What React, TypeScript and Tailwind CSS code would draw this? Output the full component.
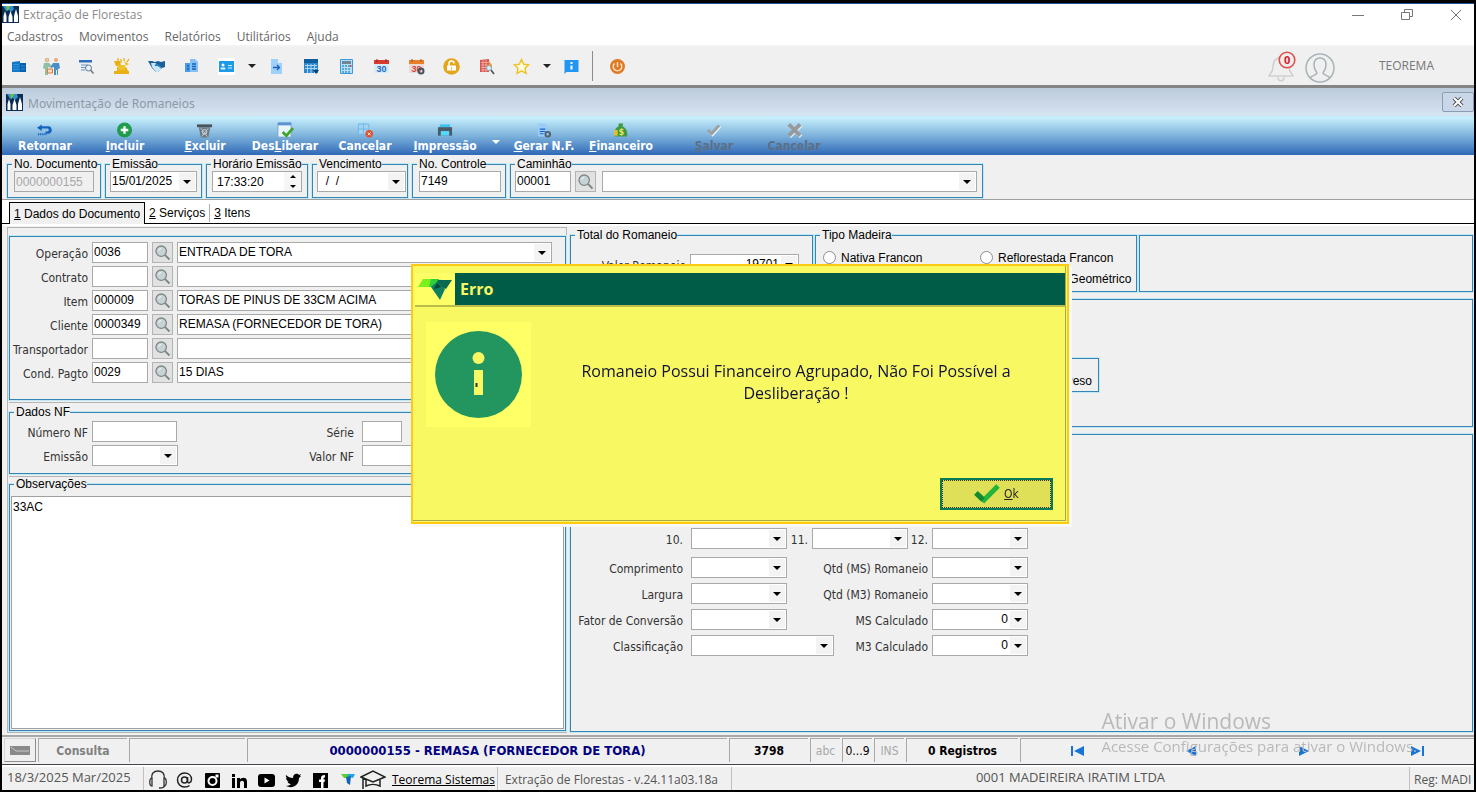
import type { ReactNode } from "react";
import clsx from "clsx";

const TAHOMA = "font-['DejaVu_Sans_Condensed','DejaVu_Sans',sans-serif]";
const SEGOE = "font-['Open_Sans',sans-serif]";

const box = "h-[21px] border border-[#a9a9a9] text-[12px] leading-[19px] outline-none rounded-none";

const TextField = ({ label, id, value = "", className }: { label?: string; id?: string; value?: string; className?: string }) => (
  <input id={id} aria-label={label} defaultValue={value} className={clsx(box, "bg-white px-px pb-px", className)} />
);

const SelectField = ({ label, id, value = "", className, right }: { label?: string; id?: string; value?: string; className?: string; right?: boolean }) => (
  <div className={clsx("grid shrink-0", className)}>
    <select
      id={id}
      aria-label={label}
      defaultValue={value}
      className={clsx(box, "col-start-1 row-start-1 w-full min-w-0 appearance-none bg-white pl-px", right ? "pr-[19px] [text-align-last:right]" : "pr-4")}
    >
      <option value={value}>{value}</option>
    </select>
    <span className="pointer-events-none col-start-1 row-start-1 mr-0.5 flex h-[17px] w-4 items-center justify-center self-center justify-self-end bg-[#f3f3f3]">
      <Caret />
    </span>
  </div>
);

const Caret = ({ color = "#000", up }: { color?: string; up?: boolean }) => (
  <svg width="8" height="4" viewBox="0 0 8 4" className={up ? "rotate-180" : ""}>
    <path d="M0 0h8L4 4z" fill={color} />
  </svg>
);

const SpinCaret = ({ up }: { up?: boolean }) => (
  <svg width="6" height="3" viewBox="0 0 6 3" className={up ? "rotate-180" : ""}>
    <path d="M0 0h6L3 3z" fill="#000" />
  </svg>
);

const LookupButton = ({ label }: { label: string }) => (
  <button type="button" aria-label={label} className="flex h-[21px] w-[21px] shrink-0 items-center justify-center border border-[#b4b4b4] bg-[#e1e1e1]">
    <svg width="17" height="17" viewBox="0 0 17 17" fill="none">
      <circle cx="7.2" cy="7.2" r="5.2" fill="#c6d3d4" stroke="#7d8788" strokeWidth="1.3" />
      <path d="M4.5 6.5a3 3 0 0 1 2.5-2" stroke="#fff" />
      <path d="M11 11l4.5 4.5" stroke="#7d8788" strokeWidth="1.8" />
    </svg>
  </button>
);

const Group = ({ title, className, bodyClass, children }: { title?: string; className?: string; bodyClass?: string; children?: ReactNode }) => (
  <fieldset className={clsx("min-w-0 shrink-0 border border-[#3585b5] shadow-[0_0_0_1px_#c3e8f5]", className)}>
    {title && <legend className="ml-1 bg-[#f0f0f0] pl-0.5 text-[12px] leading-[13px] whitespace-nowrap">{title}</legend>}
    <div className={bodyClass}>{children}</div>
  </fieldset>
);

const TreesIcon = () => (
  <svg width="17" height="17" viewBox="0 0 17 17">
    <path d="M0 0h17v17H0z" fill="#0c2d55" />
    <path d="M1 0h10l1 3-3 3-2-2-3 1z" fill="#2f8fd0" />
    <path d="M4 0h4l-1 3-2 2z" fill="#6fbf3f" />
    <path d="M3 5l1.500 5v6h-3v-6zM8.500 5l2 6v5h-4v-5zM14 3l2 7v6h-4v-6z" fill="#fff" />
  </svg>
);

const toolIcons: Record<string, ReactNode> = {
  Empresas: (
    <>
      <path d="M2 4l8-1v11H2z" fill="#1278c8" />
      <path d="M10 5h6v9h-6z" fill="#0c5fa8" />
      <path d="M3 6.500h6M3 9h6M3 11.500h6M11 8h4M11 11h4" stroke="#2f92dc" />
    </>
  ),
  Clientes: (
    <>
      <circle cx="4" cy="2" r="2" fill="#e8c9a0" stroke="#c09a6a" strokeWidth=".6" />
      <circle cx="13" cy="2" r="2" fill="#e8a878" />
      <path d="M1 5h5l3 3v2L5 9v8H2v-6L0 10z" fill="#8fc0a6" />
      <path d="M10 5h6l1 5-2 1v6h-1v-5h-1v5h-2V9L8 10V8z" fill="#4a90c8" />
      <path d="M4.500 11h5v4h-5z" fill="#ffd9c0" stroke="#e07a3a" />
    </>
  ),
  Consulta: (
    <>
      <path d="M1 2h13v2.500H1z" fill="#2b6fbd" />
      <path d="M3 7h7M3 9.500h4M3 12h4" stroke="#5b96d6" strokeWidth="1.200" />
      <circle cx="10.500" cy="10" r="3" fill="#e8f1f8" stroke="#6b7a88" />
      <path d="M12.500 12l3 3.500" stroke="#6b7a88" strokeWidth="1.500" />
    </>
  ),
  Producao: (
    <>
      <path d="M1 13h15v3H1zM4 9h9l2 4H4zM1 3h6l1 5H3z" fill="#e8b010" />
      <path d="M5 7h7v5H5zM11 3l5 3-3 2z" fill="#f0c22a" />
      <path d="M5 3V0M8 5V1M11 3V0M14 4l2-3" stroke="#e8b010" strokeWidth="1.300" />
    </>
  ),
  Negociacao: (
    <>
      <path d="M0 3h4l3 1 3-1 3 1 4-1v6l-3 1-4 4H8L4 10z" fill="#1c5e96" />
      <path d="M3 5h5l-1 3h3l4 3-4 3H8L4 9z" fill="#c9e5f7" />
      <path d="M8 6l6 4" stroke="#2d8bd0" strokeWidth="1.500" />
    </>
  ),
  Documentos: (
    <>
      <path d="M2 5h7v9H2z" fill="#4a9ae8" />
      <path d="M7 1h5l3 3v10H7z" fill="#86c0f5" />
      <path d="M9 6h4M9 8.500h4M9 11h4M4 8h2M4 11h2" stroke="#1663b8" strokeWidth="1.300" />
    </>
  ),
  Cadastro: (
    <>
      <path d="M0 0h17v17H0z" fill="#fff" />
      <path d="M1 3h15v11H1z" fill="#1e9be8" />
      <circle cx="5" cy="7" r="1.500" fill="#fff" />
      <path d="M3 10h4v1H3zM10 7.500h4M10 10h4" fill="#fff" stroke="#d3eefc" />
    </>
  ),
  Exportar: (
    <>
      <path d="M3 1h7l4 4v11H3z" fill="#9fd0fa" />
      <path d="M10 1l4 4h-4z" fill="#e3f2fd" />
      <path d="M5 9.500h6M9 7l2.500 2.500L9 12" stroke="#1a5fb8" strokeWidth="1.300" fill="none" />
    </>
  ),
  Agenda: (
    <>
      <path d="M1 1h14v4H1z" fill="#0f5f9e" />
      <path d="M1 5h14v10H1z" fill="#2c88cc" />
      <path d="M2 7.500h12M2 10.500h12M4.500 6v9M8 6v9M11.500 6v9" stroke="#a9d5f2" />
      <path d="M10 12h6l-3 4z" fill="#0b3f70" />
    </>
  ),
  Calculadora: (
    <>
      <path d="M2.500 1.500h12v14h-12z" fill="#b9dff5" stroke="#3b9ad8" />
      <path d="M4 3h9v3H4z" fill="#6e8796" />
      <path d="M5 7v8M8 7v8M11 7v8" stroke="#5aa9dc" strokeDasharray="2 1" strokeWidth="2" />
      <path d="M12 7h1.500v2H12z" fill="#d04a3a" />
    </>
  ),
  Calendario: (
    <>
      <path d="M1 2h15v4H1z" fill="#d83a30" />
      <path d="M1 6h15v9H1z" fill="#d6ebfa" />
      <path d="M4 1v3M13 1v3" stroke="#8c2a24" />
      <text x="3.500" y="13.500" fontSize="9" fontWeight="700" fill="#1e66c0">30</text>
    </>
  ),
  Parametros: (
    <>
      <path d="M1 2h15v4H1z" fill="#e8802a" />
      <path d="M1 6h15v9H1z" fill="#e9dcd6" />
      <path d="M4 1v3M13 1v3" stroke="#a0521a" />
      <text x="3.500" y="13.500" fontSize="9" fontWeight="700" fill="#d8403a">30</text>
      <circle cx="13" cy="13" r="2.500" fill="none" stroke="#44535c" strokeWidth="2" />
    </>
  ),
  Bloqueio: (
    <>
      <circle cx="8.500" cy="8.500" r="8.300" fill="#e3a51a" />
      <path d="M4 7.500h9v5H4z" fill="#fff" />
      <path d="M6 8V5.500a2.500 2.500 0 0 1 5 0" stroke="#fff" strokeWidth="1.500" fill="none" />
      <path d="M8 9.500h1v2H8z" fill="#e3a51a" />
    </>
  ),
  Relatorio: (
    <>
      <path d="M2 2l9-1v13H2z" fill="#d8564e" />
      <path d="M3 4.500h8M3 7h8M3 9.500h8M3 12h8M5 2v12M8 2v12" stroke="#f3b5ac" strokeWidth=".8" />
      <path d="M11 3l3 4v4h-3z" fill="#f0a020" />
      <circle cx="11" cy="10" r="2.500" fill="#dff0fb" stroke="#8aa5b8" />
      <path d="M13 12l3 4" stroke="#4a4a5a" strokeWidth="1.500" />
    </>
  ),
  Favoritos: <path d="M8.500 1.500l2.200 4.700 5 .6-3.700 3.500 1 5-4.500-2.500L4 15.300l1-5L1.300 6.800l5-.6z" fill="#fffbe0" stroke="#eec32a" strokeWidth="1.500" />,
  Informacao: (
    <>
      <path d="M1.500 2h14v12h-12l-2 2z" fill="#2196f3" />
      <path d="M8.500 4v2M8.500 7.500v4" stroke="#fff" strokeWidth="2" />
    </>
  ),
  Sair: (
    <>
      <circle cx="8.500" cy="8.500" r="7.500" fill="#e07b25" />
      <path d="M5.500 5.500a4.300 4.300 0 1 0 6 0M8.500 4v5" stroke="#fbe6d2" strokeWidth="1.400" fill="none" />
    </>
  ),
};

const ToolButton = ({ name, className = "w-[35px]" }: { name: string; className?: string }) => (
  <button type="button" aria-label={name} className={clsx("flex h-full shrink-0 items-center justify-center", className)}>
    <svg width="17" height="17" viewBox="0 0 17 17">{toolIcons[name]}</svg>
  </button>
);

const MenuArrow = ({ color }: { color?: string }) => (
  <button type="button" aria-label="Mais" className="flex h-full w-[15px] shrink-0 items-center justify-center">
    <Caret color={color} />
  </button>
);

const actions: { key: string; label: ReactNode; icon: ReactNode; className?: string; disabled?: boolean; arrow?: boolean }[] = [
  {
    key: "retornar",
    label: "Retornar",
    icon: (
      <>
        <path d="M5 1L0 4.500 5 8V5.500h6c2 0 2 3 0 3H9V11h3c5 0 5-8 0-8H5z" fill="#1763c0" />
        <path d="M1 11.500h9" stroke="#1763c0" strokeWidth="2" strokeDasharray="1.200 .8" />
      </>
    ),
  },
  {
    key: "incluir",
    label: <><u>I</u>ncluir</>,
    icon: (
      <>
        <circle cx="8" cy="7" r="8" fill="#1f9d4d" />
        <path d="M8 3v8M4 7h8" stroke="#fff" strokeWidth="2.500" />
      </>
    ),
  },
  {
    key: "excluir",
    label: <><u>E</u>xcluir</>,
    icon: (
      <>
        <path d="M0 1h16v3H0z" fill="#4a545c" />
        <path d="M2 4h12l-2 11H4z" fill="#6c7880" />
        <path d="M4 5l7 9M12 5l-7 9" stroke="#cdd8de" strokeWidth=".9" />
        <circle cx="8" cy="9" r="2.500" fill="none" stroke="#cdd8de" />
      </>
    ),
  },
  {
    key: "desliberar",
    label: <>Des<u>L</u>iberar</>,
    icon: (
      <>
        <path d="M1-.500h14v15H1z" fill="#eaf5fc" stroke="#7ba5cc" />
        <path d="M1-1h14v3H1z" fill="#5b93d0" />
        <path d="M6 9l4 4 7-8" stroke="#3fa62c" strokeWidth="3" fill="none" />
      </>
    ),
  },
  {
    key: "cancelar-item",
    label: <>Cance<u>l</u>ar</>,
    icon: (
      <>
        <path d="M1.500.500h11v11h-11zM7 0v11M1 6h11" stroke="#6fb6ea" fill="#a4d3f2" />
        <circle cx="13" cy="11" r="4" fill="#e2502a" />
        <path d="M11.500 9.500l3 3M14.500 9.500l-3 3" stroke="#fff" />
      </>
    ),
  },
  {
    key: "impressao",
    label: <><u>I</u>mpressão</>,
    arrow: true,
    icon: (
      <>
        <path d="M3 1h11v4H3z" fill="#39c4f0" />
        <path d="M1 4h15v9H1z" fill="#4c5a66" />
        <path d="M4 8h9v5H4z" fill="#55d6fa" />
      </>
    ),
  },
  {
    key: "gerar",
    label: <><u>G</u>erar N.F.</>,
    className: "w-[74px]",
    icon: (
      <>
        <path d="M2 0h7l3 3v11H2z" fill="#9accf8" />
        <path d="M4 6h6M4 8.500h6M4 11h4" stroke="#1864c4" strokeWidth="1.200" />
        <circle cx="12.500" cy="11.500" r="2.500" fill="none" stroke="#50606c" strokeWidth="2" />
      </>
    ),
  },
  {
    key: "financeiro",
    label: <><u>F</u>inanceiro</>,
    icon: (
      <>
        <path d="M6 0h5l-1 3c4 2 6 6 5 11H2C1 9 2 5 6 3z" fill="#3d9a3f" />
        <path d="M1 7h4v6H1z" fill="#e0c032" />
        <text x="6" y="12" fontSize="9" fontWeight="700" fill="#f3e26a">$</text>
      </>
    ),
  },
  {
    key: "salvar",
    label: <><u>S</u>alvar</>,
    className: "ml-[13px] w-[80px]",
    disabled: true,
    icon: (
      <>
        <path d="M3 8l4 4 8-9" stroke="#e8f3fa" strokeWidth="3" fill="none" />
        <path d="M2 7l4 4 8-9" stroke="#9a9fa3" strokeWidth="3" fill="none" />
      </>
    ),
  },
  {
    key: "cancelar",
    label: "Cancelar",
    disabled: true,
    icon: (
      <>
        <path d="M4 2l12 12M16 2L4 14" stroke="#dcebf5" strokeWidth="4" />
        <path d="M3 1l12 12M15 1L3 13" stroke="#96999c" strokeWidth="4" />
      </>
    ),
  },
];

const lookups = [
  { id: "operacao", label: "Operação", code: "0036", text: "ENTRADA DE TORA" },
  { id: "contrato", label: "Contrato", code: "", text: "" },
  { id: "item", label: "Item", code: "000009", text: "TORAS DE PINUS DE 33CM ACIMA" },
  { id: "cliente", label: "Cliente", code: "0000349", text: "REMASA (FORNECEDOR DE TORA)" },
  { id: "transportador", label: "Transportador", code: "", text: "" },
  { id: "pagto", label: "Cond. Pagto", code: "0029", text: "15 DIAS" },
];

const measures = [
  { left: "Comprimento", right: "Qtd (MS) Romaneio", value: "" },
  { left: "Largura", right: "Qtd (M3) Romaneio", value: "" },
  { left: "Fator de Conversão", right: "MS Calculado", value: "0" },
  { left: "Classificação", right: "M3 Calculado", value: "0", wide: true },
];

const TitleBar = () => (
  <header className={SEGOE}>
    <div className="flex h-[22px] items-center border-t border-[#1f4e9c] bg-white text-[12px] text-[#8b8b8b]">
      <TreesIcon />
      <span className="ml-1">Extração de Florestas</span>
      <div className="ml-auto flex items-center gap-[37px] pr-3">
        <button type="button" aria-label="Minimizar">
          <svg width="12" height="12" stroke="#777"><path d="M0 6.500h12" /></svg>
        </button>
        <button type="button" aria-label="Restaurar">
          <svg width="12" height="12" stroke="#777" fill="none"><path d="M.500 3.500h8v7h-8zM3.500 3V.500h8v7H9" /></svg>
        </button>
        <button type="button" aria-label="Fechar">
          <svg width="12" height="12" stroke="#777"><path d="M1 1l10 10M11 1L1 11" /></svg>
        </button>
      </div>
    </div>
    <nav className="flex h-[22px] items-center gap-4 border-b-2 border-[#f3f3f3] bg-white pt-1 pl-[5px] text-[12px] text-[#666]">
      {["Cadastros", "Movimentos", "Relatórios", "Utilitários", "Ajuda"].map((item) => (
        <button key={item} type="button">{item}</button>
      ))}
    </nav>
  </header>
);

const MainToolbar = () => (
  <div className="flex h-[41px] items-center border-b-[3px] border-[#858585] bg-[#f0f0f0]">
    <ToolButton name="Empresas" className="w-8" />
    {["Clientes", "Consulta", "Producao", "Negociacao", "Documentos", "Cadastro"].map((n) => <ToolButton key={n} name={n} />)}
    <MenuArrow color="#222" />
    {["Exportar", "Agenda", "Calculadora", "Calendario", "Parametros", "Bloqueio", "Relatorio", "Favoritos"].map((n) => <ToolButton key={n} name={n} />)}
    <MenuArrow color="#222" />
    <ToolButton name="Informacao" />
    <span className="mx-[3px] h-[30px] w-px bg-[#8c8c8c]" />
    <ToolButton name="Sair" className="w-[43px]" />
    <div className={clsx("ml-auto flex items-center pr-10", SEGOE)}>
      <button type="button" aria-label="Notificações" className="mr-1.5">
        <svg width="32" height="32" viewBox="0 0 32 32" fill="none">
          <path d="M2 26c0-2 4-3 4-9 0-5 2-9 8-10 6 1 8 5 8 10 0 6 4 7 4 9z" stroke="#cfcfcf" strokeWidth="1.500" />
          <path d="M11 27c0 5 6 5 6 0" stroke="#cfcfcf" strokeWidth="1.500" />
          <circle cx="20" cy="10" r="7.800" fill="#f4eded" stroke="#dd5148" strokeWidth="1.600" />
          <text x="17" y="14" fontSize="11" fontWeight="700" fill="#d5202c">0</text>
        </svg>
      </button>
      <button type="button" aria-label="Usuário" className="pt-1">
        <svg width="30" height="30" viewBox="0 0 30 30" fill="none" stroke="#a9b4b6" strokeWidth="1.500">
          <circle cx="15" cy="15" r="14" />
          <path d="M5 25c2-3 7-3 7-5 0-1-3-3-3-8 0-4 2-7 6-7s6 3 6 7c0 5-3 7-3 8 0 2 5 2 7 5" />
        </svg>
      </button>
      <span className="ml-11 text-[12px] text-[#777]">TEOREMA</span>
    </div>
  </div>
);

const ActionBar = () => (
  <div className={clsx("flex h-[38px] items-stretch bg-linear-to-b from-[#c9f1fd] via-[#7db2db] to-[#3069b6] pl-[3px] text-[12px] font-bold leading-[14px]", TAHOMA)}>
    {actions.map(({ key, label, icon, className = "w-[80px]", disabled, arrow }) => (
      <div key={key} className="flex">
        <button
          type="button"
          disabled={disabled}
          className={clsx("flex shrink-0 flex-col items-center justify-end gap-px pb-0.5", className, disabled ? "text-[#5c6f84]" : "text-white")}
        >
          <svg width="16" height="15" viewBox="0 0 17 15" className="overflow-visible">{icon}</svg>
          <span>{label}</span>
        </button>
        {arrow && (
          <button type="button" aria-label="Opções de impressão" className="flex w-[22px] items-center justify-center pt-3">
            <Caret color="#fff" />
          </button>
        )}
      </div>
    ))}
  </div>
);

const DocumentHeader = () => (
  <div className="flex items-start gap-1 border-b border-[#a0a0a0] bg-[#f0f0f0] px-[5px] pt-[3px] pb-px">
    <Group title="No. Documento" className="w-[94px]" bodyClass="px-1.5 pb-[5px]">
      <input aria-label="No. Documento" disabled defaultValue="0000000155" className={clsx(box, "block w-full bg-[#f0f0f0] px-px text-[#a8a8a8]")} />
    </Group>
    <Group title="Emissão" className="w-[97px]" bodyClass="px-1 pb-[5px]">
      <SelectField label="Emissão" value="15/01/2025" />
    </Group>
    <Group title="Horário Emissão" className="w-[102px]" bodyClass="px-[5px] pb-[5px]">
      <div className="flex h-[21px] border border-[#a9a9a9] bg-white">
        <input aria-label="Horário Emissão" defaultValue="17:33:20" className="w-full min-w-0 bg-white px-1 text-[12px] outline-none" />
        <div className="flex w-[17px] shrink-0 flex-col bg-[#f6f6f6]">
          <button type="button" aria-label="Aumentar" className="flex flex-1 items-center justify-center"><SpinCaret up /></button>
          <button type="button" aria-label="Diminuir" className="flex flex-1 items-center justify-center"><SpinCaret /></button>
        </div>
      </div>
    </Group>
    <Group title="Vencimento" className="w-[96px]" bodyClass="pr-px pl-1 pb-[5px]">
      <SelectField label="Vencimento" value={"\u00a0\u00a0/\u00a0\u00a0/"} />
    </Group>
    <Group title="No. Controle" className="w-[94px]" bodyClass="pr-1 pl-1.5 pb-[5px]">
      <TextField label="No. Controle" value="7149" className="block w-full" />
    </Group>
    <Group title="Caminhão" className="w-[473px]" bodyClass="px-1 pb-[5px]">
      <div className="flex gap-1">
        <TextField label="Caminhão" value="00001" className="w-[56px]" />
        <LookupButton label="Buscar caminhão" />
        <SelectField label="Descrição do caminhão" className="ml-0.5 w-[375px]" />
      </div>
    </Group>
  </div>
);

const Tabs = () => (
  <div className="flex h-6 items-end bg-white text-[12px]">
    <span className="h-px w-[7px] bg-black" />
    <button type="button" className="h-[22px] border border-b-0 border-black bg-[#f0f0f0] px-1"><u>1</u> Dados do Documento</button>
    <div className="flex h-[22px] flex-1 items-center border-b border-black">
      <button type="button" className="border-r border-[#b0b0b0] px-1"><u>2</u> Serviços</button>
      <button type="button" className="px-1"><u>3</u> Itens</button>
    </div>
  </div>
);

const FieldLabel = ({ htmlFor, className, children }: { htmlFor: string; className?: string; children: ReactNode }) => (
  <label htmlFor={htmlFor} className={clsx("shrink-0 pt-1 text-right text-[12px] leading-[17px] whitespace-nowrap text-[#333]", TAHOMA, className)}>
    {children}
  </label>
);

const LeftPanel = () => (
  <section className="flex w-[560px] shrink-0 flex-col border border-[#b5b5b5] pl-px">
    <Group className="mt-2 pt-[5px] pb-4" bodyClass="flex flex-col gap-[3px]">
      {lookups.map((row) => (
        <div key={row.id} className="flex h-[21px] items-center gap-1">
          <FieldLabel htmlFor={row.id} className="w-[78px]">{row.label}</FieldLabel>
          <TextField id={row.id} value={row.code} className="w-[56px]" />
          <LookupButton label={`Buscar ${row.label}`} />
          <SelectField label={`Descrição ${row.label}`} value={row.text} className="w-[375px]" />
        </div>
      ))}
    </Group>
    <div className="mt-0.5 border-t border-[#b5b5b5] pt-[3px]">
      <Group title="Dados NF" className="pb-[7px]" bodyClass="flex flex-col gap-[3px] pt-0.5">
        <div className="flex h-[21px] items-center">
          <FieldLabel htmlFor="numero-nf" className="mr-1 w-[78px]">Número NF</FieldLabel>
          <TextField id="numero-nf" className="w-[85px]" />
          <FieldLabel htmlFor="serie" className="mr-2 w-[177px]">Série</FieldLabel>
          <TextField id="serie" className="w-[40px]" />
        </div>
        <div className="flex h-[21px] items-center">
          <FieldLabel htmlFor="emissao-nf" className="mr-1 w-[78px]">Emissão</FieldLabel>
          <SelectField id="emissao-nf" className="w-[86px]" />
          <FieldLabel htmlFor="valor-nf" className="mr-2 w-[176px]">Valor NF</FieldLabel>
          <TextField id="valor-nf" className="w-[100px]" />
        </div>
      </Group>
    </div>
    <div className="mt-0.5 flex flex-1 flex-col border-t border-[#b5b5b5] pt-px pb-px">
      <Group title="Observações" className="flex-1" bodyClass="h-full px-px pt-[5px] pb-px">
        <textarea aria-label="Observações" defaultValue="33AC" className="block h-full min-h-[200px] w-full resize-none border border-[#a0a0a0] bg-white px-px py-0.5 text-[12px] leading-4 outline-none" />
      </Group>
    </div>
  </section>
);

const Radio = ({ name, children }: { name: string; children: ReactNode }) => (
  <label className="flex h-[21px] items-center gap-[5px] text-[12px] whitespace-nowrap">
    <input type="radio" name={name} className="h-[13px] w-[13px] shrink-0 appearance-none rounded-full border border-[#8c8c8c] bg-white" />
    {children}
  </label>
);

const RightPanel = () => (
  <section className="flex flex-1 flex-col gap-[7px] pt-0.5">
    <div className="flex gap-0.5">
      <Group title="Total do Romaneio" className="h-[63px] w-[243px]" bodyClass="flex items-center gap-1 pt-3">
        <FieldLabel htmlFor="valor-romaneio" className="w-[115px]">Valor Romaneio</FieldLabel>
        <SelectField id="valor-romaneio" value="19701" right className="w-[109px]" />
      </Group>
      <Group title="Tipo Madeira" className="h-[63px] w-[322px]" bodyClass="grid grid-cols-[157px_1fr] pt-[5px] pl-[7px]">
        <Radio name="tipo">Nativa Francon</Radio>
        <Radio name="tipo">Reflorestada Francon</Radio>
        <Radio name="tipo">Nativa Geométrico</Radio>
        <Radio name="tipo">Reflorestada Geométrico</Radio>
      </Group>
      <Group className="mt-1.5 flex-1" />
    </div>
    <Group className="h-[128px] pt-[58px]">
      <Group className="ml-[245px] h-[34px] w-[283px]" bodyClass="flex h-full items-end justify-end pr-1.5">
        <Radio name="medida">Peso</Radio>
      </Group>
    </Group>
    <Group className="mb-px flex-1 pt-[21px]">
      <div className="flex flex-col gap-[3px]">
        {[1, 4, 7, 10].map((first) => (
          <div key={first} className="flex h-[21px] items-center">
            <FieldLabel htmlFor={`d${first}`} className="mr-2 w-[112px]">{first}.</FieldLabel>
            <SelectField id={`d${first}`} className="w-[96px]" />
            <FieldLabel htmlFor={`d${first + 1}`} className="mr-1 w-[21px]">{first + 1}.</FieldLabel>
            <SelectField id={`d${first + 1}`} className="w-[96px]" />
            <FieldLabel htmlFor={`d${first + 2}`} className="mr-1 w-5">{first + 2}.</FieldLabel>
            <SelectField id={`d${first + 2}`} className="w-[96px]" />
          </div>
        ))}
      </div>
      <div className="mt-2 flex flex-col gap-[5px]">
        {measures.map((m) => (
          <div key={m.left} className="flex h-[21px] items-center">
            <FieldLabel htmlFor={m.left} className="mr-2 w-[112px]">{m.left}</FieldLabel>
            <SelectField id={m.left} className={m.wide ? "w-[143px]" : "w-[96px]"} />
            <FieldLabel htmlFor={m.right} className={clsx("mr-1", m.wide ? "w-[94px]" : "w-[141px]")}>{m.right}</FieldLabel>
            <SelectField id={m.right} value={m.value} right className="w-[96px]" />
          </div>
        ))}
      </div>
    </Group>
  </section>
);

const StatusCell = ({ className, children }: { className?: string; children?: ReactNode }) => (
  <div className={clsx("flex h-6 shrink-0 items-center justify-center border-t border-l border-[#a8a8a8]", className)}>{children}</div>
);

const NavButton = ({ label, d }: { label: string; d: string }) => (
  <button type="button" aria-label={label} className="flex h-full w-[113px] items-center justify-center">
    <svg width="14" height="10" viewBox="0 0 14 10"><path d={d} fill="#1673d8" /></svg>
  </button>
);

const StatusBar = () => (
  <div className={clsx("flex items-center gap-0.5 border-t-2 border-b border-t-[#a8a8a8] border-b-[#45474f] bg-[#f0f0f0] pt-px pb-0.5 pl-0.5 text-[12px] font-bold", TAHOMA)}>
    <button type="button" aria-label="Painel" className="flex h-6 w-8 items-center justify-center border border-[#d5d5d5] border-r-[#8c8c8c] border-b-[#8c8c8c]">
      <svg width="20" height="9"><path d="M0 0h20v9H0z" fill="#8a8a8a" /><path d="M1 1l5 4h13" stroke="#c8c8c8" fill="none" /></svg>
    </button>
    <StatusCell className="w-[89px] text-[#808080]">Consulta</StatusCell>
    <StatusCell className="w-[116px]" />
    <StatusCell className="w-[480px] text-[13px] text-[#000080]">0000000155 - REMASA (FORNECEDOR DE TORA)</StatusCell>
    <StatusCell className="w-[79px]">3798</StatusCell>
    <StatusCell className="w-[30px] font-normal text-[#a8a8a8]">abc</StatusCell>
    <StatusCell className="w-[30px] font-normal">0...9</StatusCell>
    <StatusCell className="w-[30px] font-normal text-[#a8a8a8]">INS</StatusCell>
    <StatusCell className="w-[112px]">0 Registros</StatusCell>
    <StatusCell className="flex-1">
      <NavButton label="Primeiro" d="M0 0h2v10H0zM13 0v10L3 5z" />
      <NavButton label="Anterior" d="M12 0v10L2 5z" />
      <NavButton label="Próximo" d="M2 0v10l10-5z" />
      <NavButton label="Último" d="M1 0v10l10-5zM12 0h2v10h-2z" />
    </StatusCell>
  </div>
);

const socials: { name: string; icon: ReactNode }[] = [
  { name: "Suporte", icon: <path d="M4 9C3 3 6 1 10 1s7 2 6 8M4 8c-3 0-3 8 0 8zM16 8c3 0 3 8 0 8zM17 15c0 3-3 3-6 3" fill="none" stroke="#333" strokeWidth="1.300" /> },
  {
    name: "E-mail",
    icon: (
      <g fill="none" stroke="#222" strokeWidth="1.500">
        <circle cx="9.500" cy="10" r="3" />
        <path d="M12.500 7v4c0 3 4 2 4-1.500 0-4-3-6.500-7-6.500a7 7 0 0 0 0 14c2 0 4-.5 5-1.500" />
      </g>
    ),
  },
  {
    name: "Instagram",
    icon: (
      <>
        <rect x="3" y="3" width="15" height="15" rx="1" />
        <circle cx="10.500" cy="11" r="4" fill="none" stroke="#fff" strokeWidth="2" />
        <path d="M13.500 4.500h3v3h-3z" fill="#fff" />
      </>
    ),
  },
  { name: "LinkedIn", icon: <path d="M3 8h3v10H3zM3 4h3v3H3zM8 8h3v1.500c1-2 7-3 7 2V18h-3v-5c0-3-4-3-4 0v5H8z" /> },
  {
    name: "YouTube",
    icon: (
      <>
        <rect x="2" y="4" width="17" height="13" rx="3" />
        <path d="M8.500 7.500v6l5-3z" fill="#fff" />
      </>
    ),
  },
  { name: "Twitter", icon: <path d="M3 5c2 2 4 3 7 3 0-5 5-5 6-3l2-1-1 2h1l-2 2c0 8-7 11-13 8 2 0 4-1 5-2-2 0-3-1-3.500-2.500H6C4 11 3 9 3 8l1.500.5C3 7.500 2.500 6 3 5z" /> },
  {
    name: "Facebook",
    icon: (
      <>
        <path d="M3 3h15v15H3z" />
        <path d="M11 18v-6H9v-2.500h2V8c0-2 1-3 4-3v2.500c-1.500 0-1.500.5-1.500 2H15L14.500 12h-1v6z" fill="#fff" />
      </>
    ),
  },
  {
    name: "Teorema",
    icon: (
      <>
        <path d="M4 4h7l2 4H7z" fill="#5fce2f" />
        <path d="M10 4h8l-2 4-4-1z" fill="#1fa4e8" />
        <path d="M9 7l5-1-1 9-3-2z" fill="#0e66b8" />
      </>
    ),
  },
];

const Footer = () => (
  <footer className={clsx("flex h-[25px] items-stretch overflow-hidden border-t-2 border-white bg-[#f0f0f0] text-[12px] text-[#555]", SEGOE)}>
    <span className="w-[142px] shrink-0 border-r border-[#c0c0c0] pl-[5px] text-[13px] leading-[21px]">18/3/2025 Mar/2025</span>
    <div className="flex items-center pt-0.5">
      {socials.map((s) => (
        <a key={s.name} href="#" aria-label={s.name} className="flex w-[27px] justify-center">
          <svg width="20" height="20" viewBox="0 0 20 20">{s.icon}</svg>
        </a>
      ))}
    </div>
    <a href="#" className="flex shrink-0 items-center gap-1.5 border-r border-[#c0c0c0] pt-0.5 pr-0.5 text-black underline">
      <svg width="26" height="20" viewBox="0 0 26 20" fill="none" stroke="#222" strokeWidth="1.500">
        <path d="M1 7l12-6 12 6-12 5zM6 10v6c4-2 10-2 14 0v-6M3 8v11" />
      </svg>
      Teorema Sistemas
    </a>
    <span className="w-[234px] shrink-0 border-r border-[#c0c0c0] pt-1 pl-[7px]">Extração de Florestas - v.24.11a03.18a</span>
    <span className="flex-1 text-center text-[13px] leading-[21px]">0001 MADEIREIRA IRATIM LTDA</span>
    <span className="w-[65px] shrink-0 overflow-hidden border-l border-[#c0c0c0] pt-1 pl-1 whitespace-nowrap">Reg: MADI</span>
  </footer>
);

const ErrorDialog = () => (
  <div className="fixed inset-0 flex items-center justify-center pb-1 pl-1">
    <div
      role="alertdialog"
      aria-labelledby="erro-titulo"
      className={clsx("w-[658px] border-2 border-[#fccb12] bg-[#f8f862] shadow-[3px_3px_0_#f8f8f8]", SEGOE)}
    >
      <div className="mr-px mb-px flex h-[255px] flex-col border-r border-b border-[#a9a94a] pt-[7px]">
        <div className="ml-0.5 flex h-[34px] shrink-0 border-b-2 border-[#bcbc4c]">
          <div className="flex w-[40px] items-center justify-center bg-[#ffff66]">
            <svg width="34" height="21" viewBox="0 0 34 21">
              <path d="M5 0h16l-3 8H0z" fill="#7cf01a" />
              <path d="M13 0h8l-3 8h-7z" fill="#2fd03a" />
              <path d="M20 1h14l-6 9-5-2-7 1z" fill="#0a6b52" />
              <path d="M13 8l6-5 8 7-5 11z" fill="#0c8060" />
              <path d="M19 4l4 4-7 2z" fill="#064838" />
            </svg>
          </div>
          <h2 id="erro-titulo" className="flex flex-1 items-center bg-[#005c46] pl-[5px] text-[16px] font-bold text-[#f8f862]">Erro</h2>
        </div>
        <div className="flex flex-1 pt-[15px] pl-[13px]">
          <div className="flex h-[105px] w-[105px] shrink-0 items-center justify-center bg-[#ffff66]">
            <svg width="87" height="87" viewBox="0 0 87 87">
              <circle cx="43.500" cy="43.500" r="43.500" fill="#23965f" />
              <circle cx="43.500" cy="27" r="6" fill="#f8f862" />
              <path d="M39 39h9v25h-9z" fill="#f8f862" />
              <path d="M40.500 52h2v4h-2z" fill="#2a3a20" />
            </svg>
          </div>
          <p className="flex-1 pt-[38px] pr-1 text-center text-[16px] leading-[22px] font-medium text-[#101038]">
            Romaneio Possui Financeiro Agrupado, Não Foi Possível a
            <br />
            Desliberação !
          </p>
        </div>
        <div className="flex justify-end pr-3 pb-2.5">
          <button type="button" className="h-8 w-[113px] border-2 border-[#087a58] bg-[#dfdf58] text-[12px] text-[#222]">
            <span className="flex h-full items-center justify-center gap-1 border border-dotted border-[#333]">
              <svg width="26" height="20" viewBox="0 0 26 20" fill="none">
                <path d="M2 9l8 7L24 2" stroke="#22b53a" strokeWidth="5" />
                <path d="M2 9l7 7" stroke="#138a30" strokeWidth="5" />
              </svg>
              <span className={TAHOMA}><u>O</u>k</span>
            </span>
          </button>
        </div>
      </div>
    </div>
  </div>
);

const App = () => {
  return (
    <div className="flex min-h-screen flex-col overflow-hidden border-2 border-t-[3px] border-black bg-[#f0f0f0] font-['Liberation_Sans',Arial,sans-serif] text-black">
      <TitleBar />
      <MainToolbar />
      <div className="flex h-[29px] items-center border-b border-[#c5e9f7] bg-linear-to-b from-[#bccbdb] to-[#d7e4f2] pl-1 font-['Noto_Sans',sans-serif] text-[12px] text-[#8d99a5]">
        <TreesIcon />
        <span className="ml-[5px] pt-1">Movimentação de Romaneios</span>
        <button type="button" aria-label="Fechar janela" className="ml-auto flex h-5 w-8 items-center justify-center rounded-xs border border-[#8d9bb5] bg-[#c9d7e8]">
          <svg width="12" height="10" viewBox="0 0 12 10">
            <path d="M2 1l8 8M10 1L2 9" stroke="#55565e" strokeWidth="4" />
            <path d="M2 1l8 8M10 1L2 9" stroke="#fff" strokeWidth="2" />
          </svg>
        </button>
      </div>
      <ActionBar />
      <DocumentHeader />
      <Tabs />
      <main className="flex flex-1 gap-[3px] border-t-2 border-white bg-[#f0f0f0] pt-px pr-px pb-0.5 pl-[5px]">
        <LeftPanel />
        <RightPanel />
      </main>
      <StatusBar />
      <Footer />
      <div className={clsx("pointer-events-none fixed right-[59px] bottom-[35px] text-[#b9b9b9]", SEGOE)}>
        <p className="text-[21px] leading-7">Ativar o Windows</p>
        <p className="text-[15px] leading-[22px]">Acesse Configurações para ativar o Windows.</p>
      </div>
      <ErrorDialog />
    </div>
  );
};

export default App;
